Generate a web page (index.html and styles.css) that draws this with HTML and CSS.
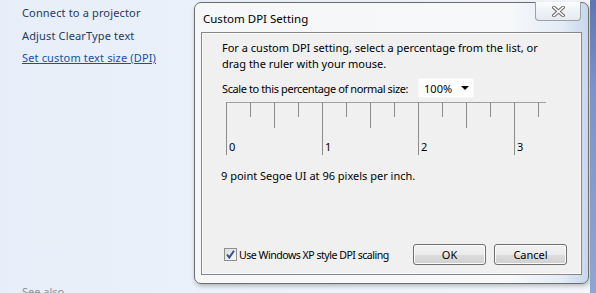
FILE: index.html
```html
<!DOCTYPE html>
<html>
<head>
<meta charset="utf-8">
<link rel="stylesheet" href="styles.css">
</head>
<body>
<div class="desk">
  <aside class="side">
    <ul class="tasks">
      <li>Connect to a projector</li>
      <li>Adjust ClearType text</li>
      <li><a class="link" href="#">Set custom text size (DPI)</a></li>
    </ul>
    <div class="seealso">See also</div>
  </aside>
  <section class="dialog">
    <header class="titlebar">
      <span class="title">Custom DPI Setting</span>
      <button class="close" aria-label="Close">
        <svg width="13" height="11" viewBox="0 0 13 11">
          <path d="M2 1.5 L11 9.5 M11 1.5 L2 9.5" stroke="#6a6a6a" stroke-width="3.6" stroke-linecap="square" fill="none"/>
          <path d="M2 1.5 L11 9.5 M11 1.5 L2 9.5" stroke="#ffffff" stroke-width="1.6" stroke-linecap="square" fill="none"/>
        </svg>
      </button>
    </header>
    <div class="client">
      <p class="intro">For a custom DPI setting, select a percentage from the list, or<br>drag the ruler with your mouse.</p>
      <div class="scale">
        <span class="scale-label">Scale to this percentage of normal size:</span>
        <div class="select"><span>100%</span><i class="arrow"></i></div>
      </div>
      <svg class="ruler" width="322" height="56" viewBox="0 0 322 56">
        <line x1="0" y1="0.5" x2="320" y2="0.5" stroke="#a0a0a0"/>
        <g stroke="#8c8c8c">
          <line x1="0.5" y1="0" x2="0.5" y2="53"/>
          <line x1="24.5" y1="0" x2="24.5" y2="15"/>
          <line x1="48.5" y1="0" x2="48.5" y2="26"/>
          <line x1="72.5" y1="0" x2="72.5" y2="15"/>
          <line x1="96.5" y1="0" x2="96.5" y2="53"/>
          <line x1="120.5" y1="0" x2="120.5" y2="15"/>
          <line x1="144.5" y1="0" x2="144.5" y2="26"/>
          <line x1="168.5" y1="0" x2="168.5" y2="15"/>
          <line x1="192.5" y1="0" x2="192.5" y2="53"/>
          <line x1="216.5" y1="0" x2="216.5" y2="15"/>
          <line x1="240.5" y1="0" x2="240.5" y2="26"/>
          <line x1="264.5" y1="0" x2="264.5" y2="15"/>
          <line x1="288.5" y1="0" x2="288.5" y2="53"/>
          <line x1="312.5" y1="0" x2="312.5" y2="15"/>
        </g>
        <g class="nums">
          <text x="3" y="49">0</text>
          <text x="99" y="49">1</text>
          <text x="195" y="49">2</text>
          <text x="291" y="49">3</text>
        </g>
      </svg>
      <p class="info">9 point Segoe UI at 96 pixels per inch.</p>
      <div class="footer">
        <label class="check">
          <span class="box">
            <svg width="11" height="11" viewBox="0 0 11 11"><path d="M2 5.5 L4.3 8.5 L9 1.8" stroke="#3a4f8c" stroke-width="2" fill="none"/></svg>
          </span>
          <span class="check-label">Use Windows XP style DPI scaling</span>
        </label>
        <div class="buttons">
          <button class="btn ok">OK</button>
          <button class="btn">Cancel</button>
        </div>
      </div>
    </div>
  </section>
  <div class="edge"></div>
</div>
</body>
</html>
```
FILE: styles.css
```css
* { box-sizing: border-box; }
html, body { margin: 0; padding: 0; }
body {
  width: 596px;
  height: 293px;
  overflow: hidden;
  font-family: "Noto Sans", "Open Sans", sans-serif;
  font-size: 11px;
  color: #000;
}
.desk {
  display: flex;
  height: 293px;
  background: linear-gradient(90deg, #e7eef9 0%, #eef3fb 60%, #f3f6fb 100%);
}
.side {
  width: 194px;
  flex: none;
  display: flex;
  flex-direction: column;
  padding: 4px 0 0 22px;
}
.tasks {
  list-style: none;
  margin: 0;
  padding: 0;
}
.tasks li {
  height: 22.5px;
  line-height: 18px;
  color: #1e3a5e;
  white-space: nowrap;
  letter-spacing: 0.15px;
}
.link { color: #1a4fa3; text-decoration: underline; }
.seealso {
  margin-top: auto;
  color: #8a8f96;
  line-height: 14px;
  margin-bottom: -6px;
}
.dialog {
  width: 395px;
  height: 282px;
  margin-top: 2px;
  flex: none;
  border: 1px solid #6e6e6e;
  border-radius: 7px;
  background: linear-gradient(90deg, #f6f7f9 0%, #f7f8fa 80%, #e4ecf6 93%, #c7d7ec 100%);
  box-shadow: 1px 2px 4px rgba(0,0,0,0.25);
  display: flex;
  flex-direction: column;
  padding: 0 6px 8px 6px;
}
.titlebar {
  height: 29px;
  flex: none;
  display: flex;
  align-items: flex-start;
  justify-content: space-between;
}
.title {
  padding: 8px 0 0 2px;
  line-height: 16px;
  font-size: 11.5px;
  color: #000;
}
.close {
  width: 46px;
  height: 19px;
  margin: -1px 1px 0 0;
  border: 1px solid #9aa3ad;
  border-top: none;
  border-radius: 0 0 4px 4px;
  background: linear-gradient(#fbfcfd, #eef1f5 50%, #e6eaf0);
  display: flex;
  align-items: center;
  justify-content: center;
  padding: 0;
}
.client {
  flex: 1;
  border: 1px solid #868686;
  background: #f0f0f0;
  box-shadow: inset 0 0 0 1px #fafafa;
  display: flex;
  flex-direction: column;
  padding: 7px 14px 9px 20px;
}
.intro {
  margin: 0;
  line-height: 16px;
  white-space: nowrap;
}
.scale {
  display: flex;
  align-items: center;
  gap: 10px;
  margin-top: 6px;
  height: 20px;
  white-space: nowrap;
}
.scale-label { letter-spacing: -0.4px; }
.select {
  width: 56px;
  height: 20px;
  background: #fff;
  border: 1px solid #f6f6f6;
  display: flex;
  align-items: center;
  justify-content: space-between;
  padding: 0 4px 0 5px;
}
.arrow {
  width: 0;
  height: 0;
  border-left: 4px solid transparent;
  border-right: 4px solid transparent;
  border-top: 4px solid #000;
}
.ruler {
  display: block;
  margin: 4px 0 0 4px;
}
.nums text {
  font-family: "Noto Sans", sans-serif;
  font-size: 11px;
  fill: #000;
}
.info {
  margin: 10px 0 0 -1px;
  line-height: 16px;
}
.footer {
  margin-top: auto;
  display: flex;
  align-items: center;
  justify-content: space-between;
}
.check {
  display: flex;
  align-items: center;
  gap: 2px;
  margin-left: 2px;
  line-height: 16px;
  white-space: nowrap;
}
.check-label {
  font-size: 10.6px;
  letter-spacing: -0.5px;
}
.box {
  width: 13px;
  height: 13px;
  border: 1px solid #8e8f8f;
  background: linear-gradient(135deg, #dcdcdc, #fbfbfb);
  display: flex;
  align-items: center;
  justify-content: center;
}
.buttons {
  display: flex;
  gap: 8px;
}
.btn {
  width: 73px;
  height: 21px;
  border: 1px solid #707070;
  border-radius: 3px;
  background: linear-gradient(#f2f2f2 0%, #ebebeb 50%, #dddddd 51%, #cfcfcf 100%);
  font-family: inherit;
  font-size: 11px;
  color: #000;
  padding: 0;
  box-shadow: inset 0 0 0 1px #fbfbfb;
}
.edge {
  flex: 1;
  margin-left: 1px;
  background: linear-gradient(180deg, #5d76b3 0%, #7b93c8 30%, #8fa5d2 100%);
}
```
